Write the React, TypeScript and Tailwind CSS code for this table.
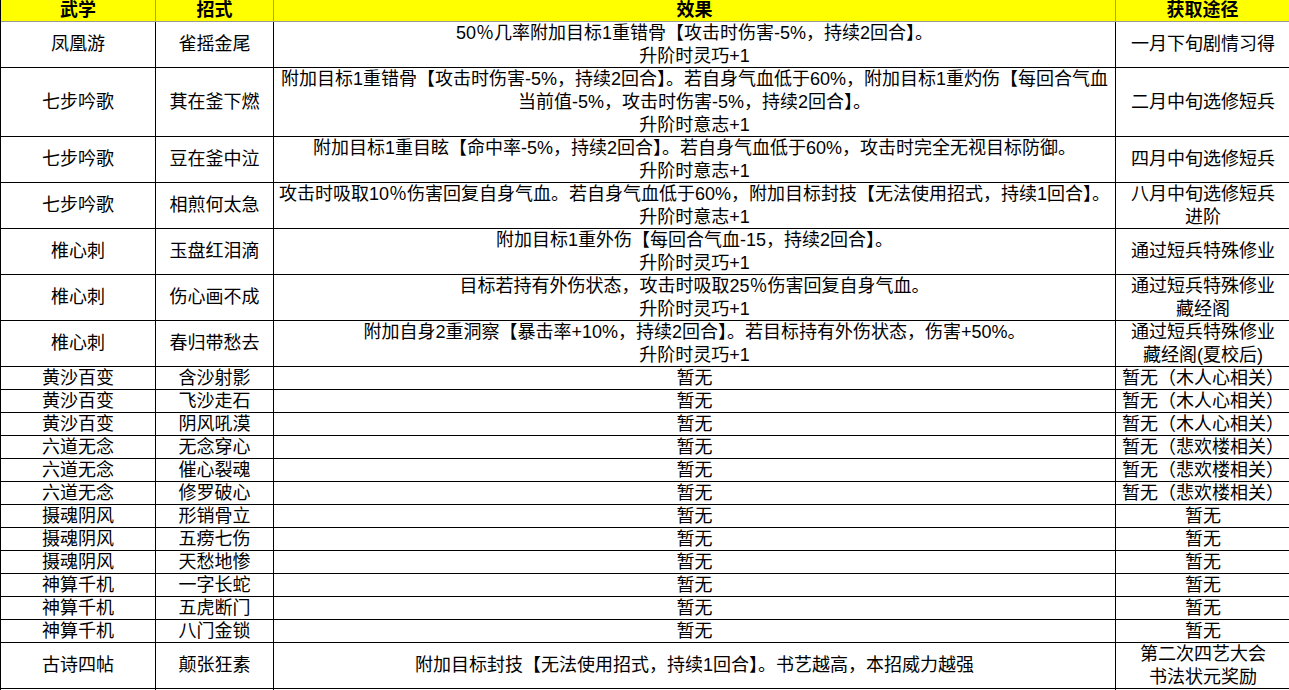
import React from 'react';

interface Row {
  school: string;
  move: string;
  effect: string[];
  source: string[];
  h: string;
}

const rows: Row[] = [
  { school: '凤凰游', move: '雀摇金尾', effect: ['50％几率附加目标1重错骨【攻击时伤害-5%，持续2回合】。', '升阶时灵巧+1'], source: ['一月下旬剧情习得'], h: 'h-[46px]' },
  { school: '七步吟歌', move: '萁在釜下燃', effect: ['附加目标1重错骨【攻击时伤害-5%，持续2回合】。若自身气血低于60%，附加目标1重灼伤【每回合气血', '当前值-5%，攻击时伤害-5%，持续2回合】。', '升阶时意志+1'], source: ['二月中旬选修短兵'], h: 'h-[69px]' },
  { school: '七步吟歌', move: '豆在釜中泣', effect: ['附加目标1重目眩【命中率-5%，持续2回合】。若自身气血低于60%，攻击时完全无视目标防御。', '升阶时意志+1'], source: ['四月中旬选修短兵'], h: 'h-[46px]' },
  { school: '七步吟歌', move: '相煎何太急', effect: ['攻击时吸取10％伤害回复自身气血。若自身气血低于60%，附加目标封技【无法使用招式，持续1回合】。', '升阶时意志+1'], source: ['八月中旬选修短兵', '进阶'], h: 'h-[46px]' },
  { school: '椎心刺', move: '玉盘红泪滴', effect: ['附加目标1重外伤【每回合气血-15，持续2回合】。', '升阶时灵巧+1'], source: ['通过短兵特殊修业'], h: 'h-[46px]' },
  { school: '椎心刺', move: '伤心画不成', effect: ['目标若持有外伤状态，攻击时吸取25％伤害回复自身气血。', '升阶时灵巧+1'], source: ['通过短兵特殊修业', '藏经阁'], h: 'h-[46px]' },
  { school: '椎心刺', move: '春归带愁去', effect: ['附加自身2重洞察【暴击率+10%，持续2回合】。若目标持有外伤状态，伤害+50%。', '升阶时灵巧+1'], source: ['通过短兵特殊修业', '藏经阁(夏校后)'], h: 'h-[46px]' },
  { school: '黄沙百变', move: '含沙射影', effect: ['暂无'], source: ['暂无（木人心相关）'], h: 'h-[23px]' },
  { school: '黄沙百变', move: '飞沙走石', effect: ['暂无'], source: ['暂无（木人心相关）'], h: 'h-[23px]' },
  { school: '黄沙百变', move: '阴风吼漠', effect: ['暂无'], source: ['暂无（木人心相关）'], h: 'h-[23px]' },
  { school: '六道无念', move: '无念穿心', effect: ['暂无'], source: ['暂无（悲欢楼相关）'], h: 'h-[23px]' },
  { school: '六道无念', move: '催心裂魂', effect: ['暂无'], source: ['暂无（悲欢楼相关）'], h: 'h-[23px]' },
  { school: '六道无念', move: '修罗破心', effect: ['暂无'], source: ['暂无（悲欢楼相关）'], h: 'h-[23px]' },
  { school: '摄魂阴风', move: '形销骨立', effect: ['暂无'], source: ['暂无'], h: 'h-[23px]' },
  { school: '摄魂阴风', move: '五痨七伤', effect: ['暂无'], source: ['暂无'], h: 'h-[23px]' },
  { school: '摄魂阴风', move: '天愁地惨', effect: ['暂无'], source: ['暂无'], h: 'h-[23px]' },
  { school: '神算千机', move: '一字长蛇', effect: ['暂无'], source: ['暂无'], h: 'h-[23px]' },
  { school: '神算千机', move: '五虎断门', effect: ['暂无'], source: ['暂无'], h: 'h-[23px]' },
  { school: '神算千机', move: '八门金锁', effect: ['暂无'], source: ['暂无'], h: 'h-[23px]' },
  { school: '古诗四帖', move: '颠张狂素', effect: ['附加目标封技【无法使用招式，持续1回合】。书艺越高，本招威力越强'], source: ['第二次四艺大会', '书法状元奖励'], h: 'h-[46px]' },
  { school: '', move: '', effect: [''], source: [''], h: 'h-[23px]' },
];

const cell = 'flex flex-col items-center justify-center text-center border-r border-b border-black overflow-hidden';

const Lines = ({ lines }: { lines: string[] }) => (
  <>
    {lines.map((l, i) => (
      <div key={i} className="whitespace-nowrap">{l}</div>
    ))}
  </>
);

export default function App() {
  return (
    <div
      className="w-[1289px] h-[690px] overflow-hidden bg-white text-black text-[18px] leading-[23px]"
      style={{ fontFamily: '"Liberation Sans", "Noto Sans CJK SC", sans-serif' }}
    >
      <div className="grid grid-cols-[155px_118px_842px_174px] border-l border-black">
        {['武学', '招式', '效果', '获取途径'].map(t => (
          <div key={t} className="h-[22px] bg-[#ffff00] flex items-center justify-center font-bold border-r border-b border-[#9a9a9a] leading-[21px]">
            {t}
          </div>
        ))}
        {rows.map((r, i) => (
          <React.Fragment key={i}>
            <div className={`${cell} ${r.h}`}>{r.school}</div>
            <div className={`${cell} ${r.h}`}>{r.move}</div>
            <div className={`${cell} ${r.h}`}><Lines lines={r.effect} /></div>
            <div className={`${cell} ${r.h} border-r-0`}><Lines lines={r.source} /></div>
          </React.Fragment>
        ))}
      </div>
    </div>
  );
}
